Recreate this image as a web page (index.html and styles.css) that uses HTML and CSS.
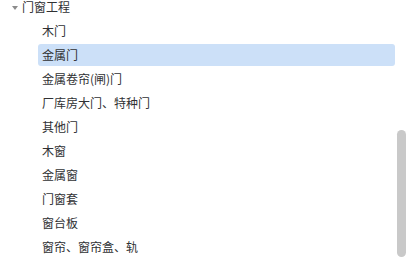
FILE: index.html
```html
<!DOCTYPE html>
<html lang="zh">
<head>
<meta charset="utf-8">
<link rel="stylesheet" href="styles.css">
</head>
<body>
<div class="tree">
  <div class="node">
    <div class="row parent"><span class="caret"></span><span class="label">门窗工程</span></div>
    <div class="children">
      <div class="row"><span class="label">木门</span></div>
      <div class="row selected"><span class="label">金属门</span></div>
      <div class="row"><span class="label">金属卷帘(闸)门</span></div>
      <div class="row"><span class="label">厂库房大门、特种门</span></div>
      <div class="row"><span class="label">其他门</span></div>
      <div class="row"><span class="label">木窗</span></div>
      <div class="row"><span class="label">金属窗</span></div>
      <div class="row"><span class="label">门窗套</span></div>
      <div class="row"><span class="label">窗台板</span></div>
      <div class="row"><span class="label">窗帘、窗帘盒、轨</span></div>
    </div>
  </div>
  <div class="scrollbar"></div>
</div>
</body>
</html>
```
FILE: styles.css
```css
html, body {
  margin: 0;
  padding: 0;
  background: #ffffff;
}
body {
  width: 408px;
  height: 263px;
  overflow: hidden;
  font-family: "Noto Sans CJK SC", "Noto Sans", sans-serif;
  font-size: 12px;
  color: #303133;
}
.tree {
  position: relative;
  width: 408px;
  height: 263px;
  overflow: hidden;
}
.node {
  margin-top: -4px;
  display: flex;
  flex-direction: column;
}
.row {
  height: 22px;
  display: flex;
  align-items: center;
  margin-bottom: 2px;
  border-radius: 3px;
  line-height: 22px;
}
.parent {
  padding-left: 12px;
}
.caret {
  width: 0;
  height: 0;
  border-left: 3.5px solid transparent;
  border-right: 3.5px solid transparent;
  border-top: 4px solid #8c8c8c;
  margin-right: 4px;
  margin-top: 1px;
}
.children {
  display: flex;
  flex-direction: column;
  padding-left: 38px;
  padding-right: 13px;
}
.children .row {
  padding-left: 4px;
}
.selected {
  background: #cce0f8;
}
.scrollbar {
  position: absolute;
  left: 397px;
  top: 130px;
  width: 9px;
  height: 127px;
  border-radius: 5px;
  background: #c9c9c9;
}
```
